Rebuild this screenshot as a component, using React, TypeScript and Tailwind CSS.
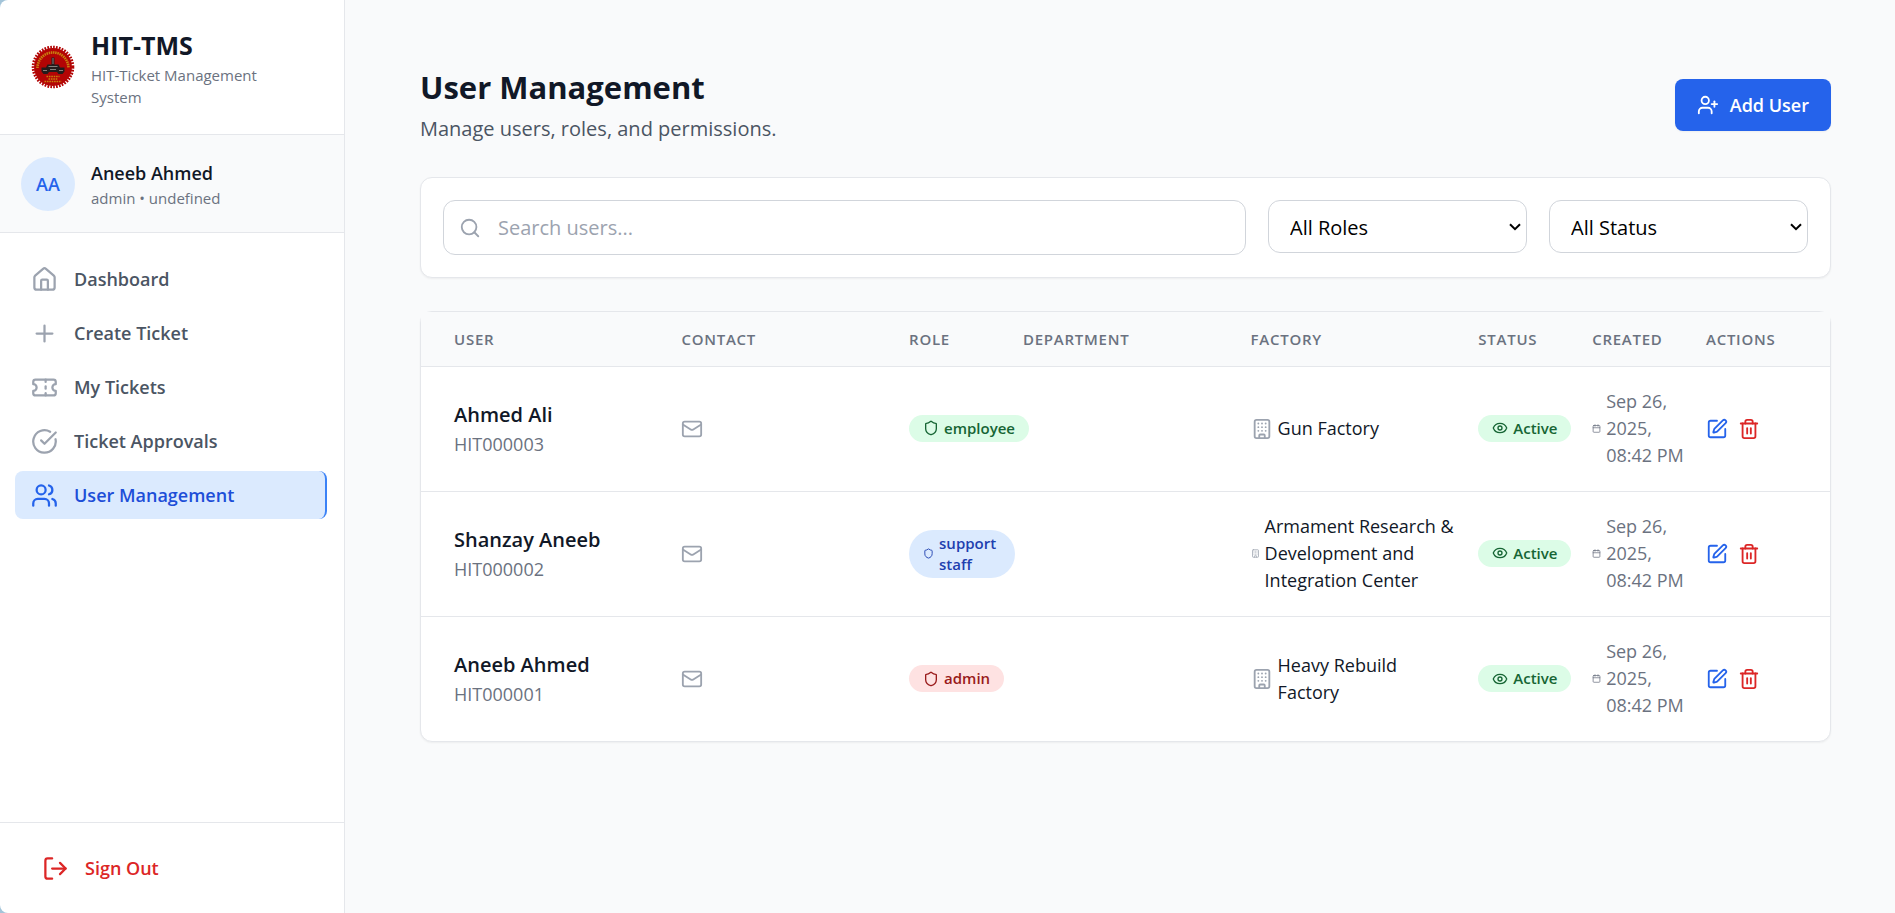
import type { ReactNode } from "react";
import {
  Building,
  Calendar,
  CircleCheckBig,
  Eye,
  House,
  LogOut,
  Mail,
  Plus,
  Search,
  Shield,
  SquarePen,
  Ticket,
  Trash2,
  UserPlus,
  Users,
} from "lucide-react";

type Role = "employee" | "support staff" | "admin";

interface User {
  name: string;
  code: string;
  role: Role;
  factory: string;
  created: string;
}

const users: User[] = [
  { name: "Ahmed Ali", code: "HIT000003", role: "employee", factory: "Gun Factory", created: "Sep 26, 2025, 08:42 PM" },
  {
    name: "Shanzay Aneeb",
    code: "HIT000002",
    role: "support staff",
    factory: "Armament Research & Development and Integration Center",
    created: "Sep 26, 2025, 08:42 PM",
  },
  { name: "Aneeb Ahmed", code: "HIT000001", role: "admin", factory: "Heavy Rebuild Factory", created: "Sep 26, 2025, 08:42 PM" },
];

const roleStyles: Record<Role, string> = {
  employee: "bg-[#dcfce7] text-[#166534]",
  "support staff": "bg-[#dbeafe] text-[#1e40af]",
  admin: "bg-[#fee2e2] text-[#991b1b]",
};

const navItems = [
  { label: "Dashboard", icon: House },
  { label: "Create Ticket", icon: Plus },
  { label: "My Tickets", icon: Ticket },
  { label: "Ticket Approvals", icon: CircleCheckBig },
  { label: "User Management", icon: Users, active: true },
];

const columns = [
  { label: "User", width: "w-[18.48%]" },
  { label: "Contact", width: "w-[16.16%]" },
  { label: "Role", width: "w-[8.08%]" },
  { label: "Department", width: "w-[16.16%]" },
  { label: "Factory", width: "w-[16.16%]" },
  { label: "Status", width: "w-[8.08%]" },
  { label: "Created", width: "w-[8.08%]" },
  { label: "Actions", width: "w-[8.8%]" },
];

function Logo() {
  return (
    <svg viewBox="0 0 44 44" className="size-11 shrink-0" aria-hidden="true">
      <circle cx="22" cy="22" r="19.8" fill="none" stroke="#b30505" strokeWidth="3" strokeDasharray="1.7 1.2" />
      <circle cx="22" cy="22" r="19" fill="#b30505" />
      <path d="M6.500 23A15.500 15.500 0 0 1 37.500 23" fill="none" stroke="#c9800f" strokeWidth="2.600" strokeDasharray="1.5 0.7" />
      <path d="M15.500 31.500H28.500M17.500 34H26.500M13.500 36.500H30.500" fill="none" stroke="#c9800f" strokeWidth="1.400" strokeDasharray="1.6 0.8" />
      <path d="M20.500 12.500h3v7h4l1.500 3h4.500v4l-2 2.500h-4l-1.500-2h-8L16.500 29h-4l-2-2.500v-4H15l1.500-3h4z" fill="#241c1c" />
      <path d="M22 13v6M17.500 21.500h9M12 25.500h4M28 25.500h4M19 24.500h6" stroke="#85807c" strokeWidth="1" fill="none" />
    </svg>
  );
}

function Pill({ className, children }: { className: string; children: ReactNode }) {
  return (
    <span className={`inline-flex items-center gap-[5px] rounded-full px-[14px] py-[3px] text-[15px] leading-[21px] font-semibold ${className}`}>
      {children}
    </span>
  );
}

function FilterSelect({ label, options }: { label: string; options: string[] }) {
  return (
    <div className="relative w-[259px]">
      <select
        aria-label={label}
        className="h-[53px] w-full appearance-none rounded-xl border border-[#d1d5db] bg-white pt-[2px] pr-8 pl-[21px] text-[20px] text-black"
      >
        {options.map((option) => (
          <option key={option}>{option}</option>
        ))}
      </select>
      <svg viewBox="0 0 12 8" className="pointer-events-none absolute top-[23px] right-[6px] h-2 w-3" aria-hidden="true">
        <path d="M1 1.200 6 6.200 11 1.200" fill="none" stroke="#000" strokeWidth="2" />
      </svg>
    </div>
  );
}

function Sidebar() {
  return (
    <aside className="flex w-[345px] shrink-0 flex-col rounded-l-lg border-r border-[#e5e7eb] bg-white">
      <div className="flex items-center gap-4 border-b border-[#e5e7eb] py-[26px] pr-16 pl-[31px]">
        <Logo />
        <div>
          <h1 className="text-[25px] leading-[38px] font-bold">HIT-TMS</h1>
          <p className="text-[15px] leading-[22px] text-[#6b7280]">HIT-Ticket Management System</p>
        </div>
      </div>

      <div className="flex items-center gap-4 border-b border-[#e5e7eb] bg-[#f9fafb] px-[21px] pt-[22px] pb-[21px]">
        <div className="flex size-[54px] shrink-0 items-center justify-center rounded-full bg-[#dbeafe] text-[18px] font-semibold text-[#2563eb]">
          AA
        </div>
        <div>
          <p className="text-[18px] leading-[27px] font-semibold">Aneeb Ahmed</p>
          <p className="text-[15px] leading-[22px] text-[#6b7280]">admin • undefined</p>
        </div>
      </div>

      <nav className="flex flex-1 flex-col gap-[6px] py-[22px] pr-[17px] pl-[15px]">
        {navItems.map(({ label, icon: Icon, active }) => (
          <a
            key={label}
            href="#"
            aria-current={active ? "page" : undefined}
            className={
              active
                ? "flex h-12 items-center gap-4 rounded-lg border-r-2 border-[#3b82f6] bg-[#dbeafe] px-4 text-[18px] font-semibold text-[#1d4ed8]"
                : "flex h-12 items-center gap-4 rounded-lg px-4 text-[18px] font-semibold text-[#4b5563]"
            }
          >
            <Icon className={active ? "size-[27px] text-[#2563eb]" : "size-[27px] text-[#9ca3af]"} />
            {label}
          </a>
        ))}
      </nav>

      <div className="border-t border-[#e5e7eb] px-[22px] py-[21px]">
        <button type="button" className="flex h-12 w-full items-center gap-4 rounded-lg px-5 text-[18px] font-semibold text-[#dc2626]">
          <LogOut className="size-[27px]" />
          Sign Out
        </button>
      </div>
    </aside>
  );
}

function UserRow({ user }: { user: User }) {
  const wrappedRole = user.role === "support staff";
  const longFactory = user.factory.length > 30;
  return (
    <tr className="h-[125px] border-t border-[#e5e7eb]">
      <td className="pl-[33px]">
        <p className="text-[20px] leading-[32px] font-semibold">{user.name}</p>
        <p className="text-[18px] leading-[27px] text-[#6b7280]">{user.code}</p>
      </td>
      <td>
        <Mail className="size-[22px] text-[#9ca3af]" />
      </td>
      <td className="pr-2">
        <Pill className={roleStyles[user.role]}>
          <Shield className={wrappedRole ? "size-[11px] shrink-0" : "size-4 shrink-0"} />
          {user.role}
        </Pill>
      </td>
      <td />
      <td className="pr-5">
        <div className="flex items-center gap-[5px] text-[18px] leading-[27px]">
          <Building className={longFactory ? "size-[9px] shrink-0 text-[#9ca3af]" : "size-[22px] shrink-0 text-[#9ca3af]"} />
          {user.factory}
        </div>
      </td>
      <td>
        <Pill className="bg-[#dcfce7] text-[#166534]">
          <Eye className="size-4 shrink-0" />
          Active
        </Pill>
      </td>
      <td className="pr-5">
        <div className="flex items-center gap-[5px] text-[18px] leading-[27px] text-[#6b7280]">
          <Calendar className="size-[9px] shrink-0" />
          {user.created}
        </div>
      </td>
      <td>
        <div className="flex items-center gap-[10px]">
          <button type="button" aria-label={`Edit ${user.name}`} className="text-[#2563eb]">
            <SquarePen className="size-[22px]" />
          </button>
          <button type="button" aria-label={`Delete ${user.name}`} className="text-[#dc2626]">
            <Trash2 className="size-[22px]" />
          </button>
        </div>
      </td>
    </tr>
  );
}

export default function App() {
  return (
    <div className="flex min-h-screen bg-[linear-gradient(to_right,#a3c4d9_50%,#f9fafb_50%)] font-['Open_Sans',sans-serif] text-[#111827]">
      <Sidebar />
      <main className="min-w-0 flex-1 bg-[#f9fafb] pt-[65px] pr-16 pb-16 pl-[75px]">
        <div className="flex items-center justify-between">
          <div>
            <h2 className="text-[31px] leading-[44px] font-bold">User Management</h2>
            <p className="mt-1 text-[20px] leading-[32px] text-[#4b5563]">Manage users, roles, and permissions.</p>
          </div>
          <button
            type="button"
            className="flex h-[52px] items-center gap-[11px] rounded-lg bg-[#2563eb] px-[22px] text-[18px] font-semibold text-white shadow-xs"
          >
            <UserPlus className="size-[22px]" />
            Add User
          </button>
        </div>

        <div className="mt-8 flex items-start gap-[22px] rounded-xl border border-[#e5e7eb] bg-white p-[22px] shadow-xs">
          <div className="relative flex-1">
            <Search className="absolute top-[17px] left-4 size-[22px] text-[#9ca3af]" />
            <input
              type="text"
              aria-label="Search users"
              placeholder="Search users..."
              className="h-[55px] w-full rounded-xl border border-[#d1d5db] bg-white pr-4 pl-[54px] text-[20px] placeholder:text-[#9ca3af]"
            />
          </div>
          <FilterSelect label="Role" options={["All Roles"]} />
          <FilterSelect label="Status" options={["All Status"]} />
        </div>

        <div className="mt-[33px] rounded-xl border border-[#e5e7eb] bg-white shadow-xs">
          <table className="w-full table-fixed border-collapse text-left">
            <thead>
              <tr className="h-[54px] bg-[#f9fafb]">
                {columns.map(({ label, width }) => (
                  <th
                    key={label}
                    scope="col"
                    className={`${width} text-[15px] font-semibold tracking-wider text-[#6b7280] uppercase first:pl-[33px]`}
                  >
                    {label}
                  </th>
                ))}
              </tr>
            </thead>
            <tbody>
              {users.map((user) => (
                <UserRow key={user.code} user={user} />
              ))}
            </tbody>
          </table>
        </div>
      </main>
    </div>
  );
}
